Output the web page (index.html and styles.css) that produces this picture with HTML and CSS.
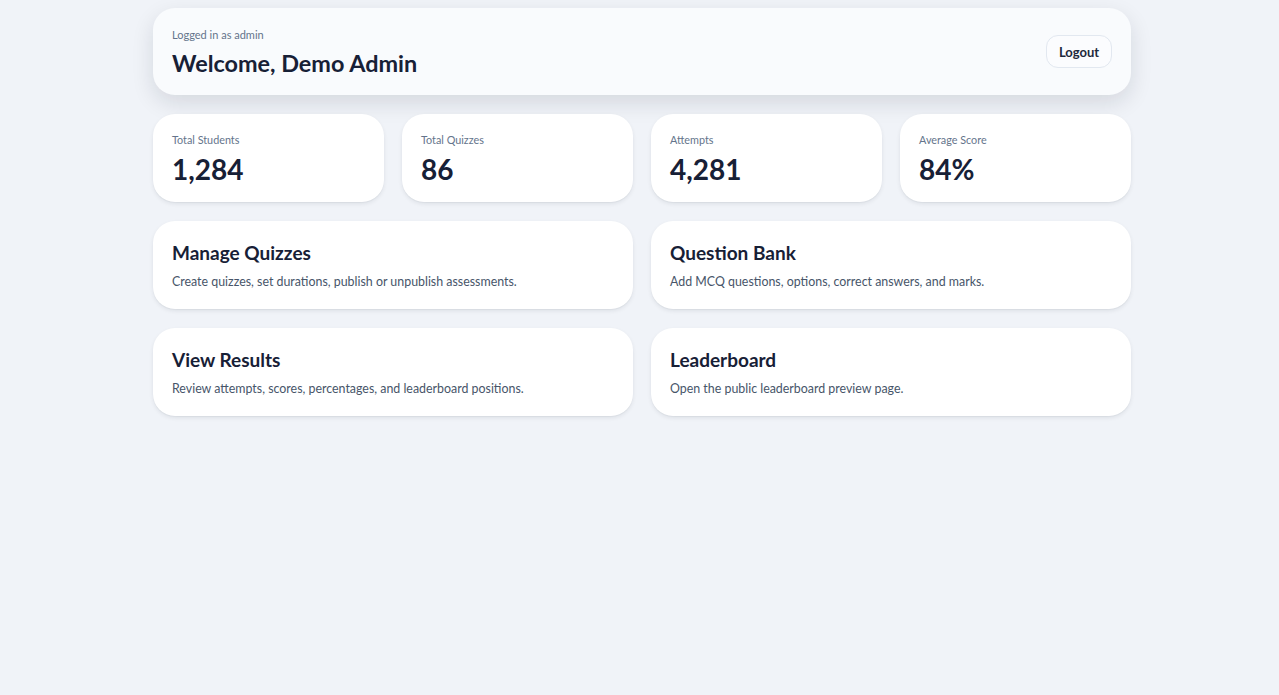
FILE: index.html
```html
<!DOCTYPE html>
<html>
<head>
<meta charset="utf-8">
<title>Admin Dashboard</title>
<link rel="stylesheet" href="styles.css">
</head>
<body>
<main class="wrap">
  <header class="topbar">
    <div class="who">
      <p class="who-label">Logged in as admin</p>
      <h1 class="who-title">Welcome, Demo Admin</h1>
    </div>
    <button class="logout">Logout</button>
  </header>

  <section class="stats">
    <div class="card stat"><p class="stat-label">Total Students</p><p class="stat-value">1,284</p></div>
    <div class="card stat"><p class="stat-label">Total Quizzes</p><p class="stat-value">86</p></div>
    <div class="card stat"><p class="stat-label">Attempts</p><p class="stat-value">4,281</p></div>
    <div class="card stat"><p class="stat-label">Average Score</p><p class="stat-value">84%</p></div>
  </section>

  <section class="actions">
    <a class="card action" href="#"><h2 class="action-title">Manage Quizzes</h2><p class="action-desc">Create quizzes, set durations, publish or unpublish assessments.</p></a>
    <a class="card action" href="#"><h2 class="action-title">Question Bank</h2><p class="action-desc">Add MCQ questions, options, correct answers, and marks.</p></a>
    <a class="card action" href="#"><h2 class="action-title">View Results</h2><p class="action-desc">Review attempts, scores, percentages, and leaderboard positions.</p></a>
    <a class="card action" href="#"><h2 class="action-title">Leaderboard</h2><p class="action-desc">Open the public leaderboard preview page.</p></a>
  </section>
</main>
</body>
</html>
```
FILE: styles.css
```css
* { box-sizing: border-box; }
html, body { margin: 0; padding: 0; }
body {
  background: #f0f3f8;
  font-family: "Lato", "Noto Sans", sans-serif;
  color: #172036;
  min-height: 695px;
}
p, h1, h2 { margin: 0; }
.wrap {
  width: 978px;
  margin-left: calc(50% - 486.5px);
  padding-top: 8px;
  display: flex;
  flex-direction: column;
  gap: 19px;
}
.topbar {
  background: #f9fbfd;
  border-radius: 22px;
  height: 87px;
  padding: 0 19px;
  display: flex;
  align-items: center;
  justify-content: space-between;
  box-shadow: 0 8px 22px rgba(15, 23, 42, 0.12);
}
.who-label {
  font-size: 11px;
  color: #64748b;
  line-height: 16px;
  margin-top: 2px;
}
.who-title {
  font-size: 23.4px;
  font-weight: 700;
  line-height: 32px;
  margin-top: 4px;
}
.logout {
  font-family: inherit;
  font-size: 13px;
  font-weight: 700;
  color: #1e293b;
  background: #fbfcfe;
  border: 1px solid #e2e8f0;
  border-radius: 12px;
  height: 33px;
  width: 66px;
  padding: 0;
}
.card {
  background: #ffffff;
  border-radius: 22px;
  box-shadow: 0 2px 4px rgba(15, 23, 42, 0.08), 0 1px 1px rgba(15, 23, 42, 0.04);
}
.stats {
  display: grid;
  grid-template-columns: repeat(4, 1fr);
  gap: 18px;
}
.stat {
  height: 88px;
  padding: 18px 19px 0;
}
.stat-label {
  font-size: 10.8px;
  color: #64748b;
  line-height: 16px;
}
.stat-value {
  font-size: 28px;
  font-weight: 700;
  line-height: 36px;
  margin-top: 3px;
}
.actions {
  display: grid;
  grid-template-columns: 1fr 1fr;
  column-gap: 18px;
  row-gap: 19px;
}
.action {
  display: block;
  height: 88px;
  padding: 19px 19px 0;
  text-decoration: none;
  color: inherit;
}
.action-title {
  font-size: 19px;
  font-weight: 700;
  line-height: 26px;
}
.action-desc {
  font-size: 12.4px;
  color: #475569;
  line-height: 18px;
  margin-top: 7px;
}
```
